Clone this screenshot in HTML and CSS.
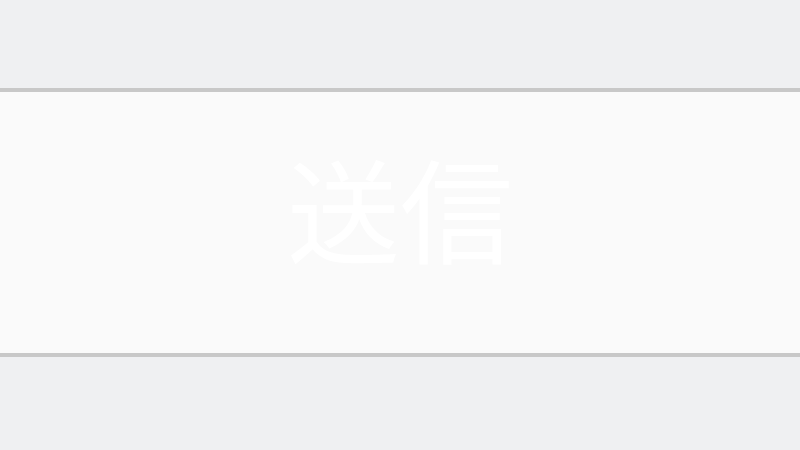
FILE: index.html
```html
<!DOCTYPE html>
<html lang="ja">
<head>
<meta charset="utf-8">
<link rel="stylesheet" href="styles.css">
</head>
<body>
<div class="page">
  <button class="send">送信</button>
</div>
</body>
</html>
```
FILE: styles.css
```css
html, body {
  margin: 0;
  padding: 0;
  background: #eff0f2;
  height: 100%;
}
.page {
  padding-top: 88px;
}
.send {
  display: flex;
  align-items: center;
  justify-content: center;
  width: 100%;
  height: 269px;
  margin: 0;
  padding: 0 0 32px 0;
  border: none;
  border-top: 4px solid #c8c8c8;
  border-bottom: 4px solid #c8c8c8;
  background: #fafafa;
  color: #ffffff;
  font-family: "Noto Sans CJK JP", sans-serif;
  font-weight: 400;
  font-size: 113px;
  line-height: 1;
  box-sizing: border-box;
}
```
